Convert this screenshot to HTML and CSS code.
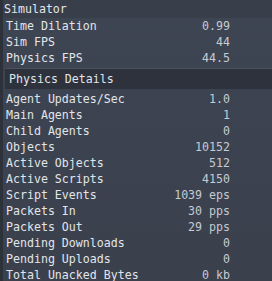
FILE: index.html
```html
<!DOCTYPE html>
<html>
<head>
<meta charset="utf-8">
<link rel="stylesheet" href="styles.css">
</head>
<body>
<div class="panel">
  <div class="title">Simulator</div>
  <div class="row"><span class="label">Time Dilation</span><span class="val">0.99</span></div>
  <div class="row"><span class="label">Sim FPS</span><span class="val">44</span></div>
  <div class="row"><span class="label">Physics FPS</span><span class="val">44.5</span></div>
  <div class="section">Physics Details</div>
  <div class="row"><span class="label">Agent Updates/Sec</span><span class="val">1.0</span></div>
  <div class="row"><span class="label">Main Agents</span><span class="val">1</span></div>
  <div class="row"><span class="label">Child Agents</span><span class="val">0</span></div>
  <div class="row"><span class="label">Objects</span><span class="val">10152</span></div>
  <div class="row"><span class="label">Active Objects</span><span class="val">512</span></div>
  <div class="row"><span class="label">Active Scripts</span><span class="val">4150</span></div>
  <div class="row"><span class="label">Script Events</span><span class="val">1039 eps</span></div>
  <div class="row"><span class="label">Packets In</span><span class="val">30 pps</span></div>
  <div class="row"><span class="label">Packets Out</span><span class="val">29 pps</span></div>
  <div class="row"><span class="label">Pending Downloads</span><span class="val">0</span></div>
  <div class="row"><span class="label">Pending Uploads</span><span class="val">0</span></div>
  <div class="row"><span class="label">Total Unacked Bytes</span><span class="val">0 kb</span></div>
</div>
</body>
</html>
```
FILE: styles.css
```css
html, body {
  margin: 0;
  padding: 0;
  background: #3b4250;
}
.panel {
  width: 272px;
  height: 281px;
  box-sizing: border-box;
  background: linear-gradient(180deg, #3e4553 0%, #3a404c 100%);
  border-left: 3px solid #2c313a;
  font-family: "DejaVu Sans Mono", monospace;
  font-size: 11.6px;
  color: #e2e5ea;
  overflow: hidden;
}
.title {
  height: 18px;
  line-height: 19px;
  padding-left: 1px;
  background: #383e4a;
}
.row {
  display: flex;
  height: 16px;
  line-height: 17px;
  padding-left: 3px;
  width: 224px;
  box-sizing: content-box;
}
.label {
  flex: 1;
  white-space: nowrap;
}
.val {
  color: #c6cad2;
  white-space: pre;
}
.section {
  height: 20px;
  line-height: 20px;
  margin: 2px 0 2px 2px;
  padding-left: 4px;
  background: #2d323c;
  border-top: 1px solid #4a5160;
}
```
